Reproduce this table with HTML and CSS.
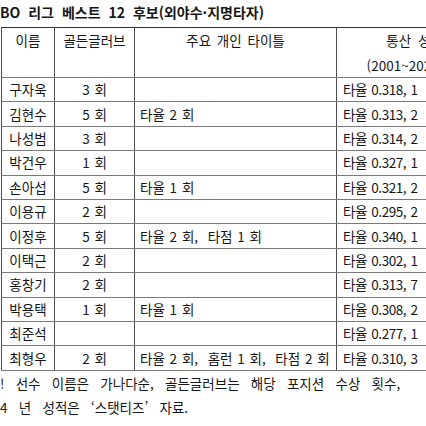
FILE: index.html
```html
<!DOCTYPE html>
<html lang="ko">
<head>
<meta charset="utf-8">
<link rel="stylesheet" href="styles.css">
</head>
<body>
<div class="page">
  <div class="title">BO 리그 베스트 12 후보(외야수·지명타자)</div>
  <table class="board">
    <colgroup>
      <col class="c-name">
      <col class="c-gg">
      <col class="c-title">
      <col class="c-stat">
    </colgroup>
    <thead>
      <tr>
        <th>이름</th>
        <th>골든글러브</th>
        <th class="tt-head">주요 개인 타이틀</th>
        <th class="stat-head">통산 성적<br>(2001~2024 년)</th>
      </tr>
    </thead>
    <tbody>
      <tr><td class="name">구자욱</td><td class="gg">3 회</td><td class="tt"></td><td class="st">타율 0.318, 1</td></tr>
      <tr><td class="name">김현수</td><td class="gg">5 회</td><td class="tt">타율 2 회</td><td class="st">타율 0.313, 2</td></tr>
      <tr><td class="name">나성범</td><td class="gg">3 회</td><td class="tt"></td><td class="st">타율 0.314, 2</td></tr>
      <tr><td class="name">박건우</td><td class="gg">1 회</td><td class="tt"></td><td class="st">타율 0.327, 1</td></tr>
      <tr><td class="name">손아섭</td><td class="gg">5 회</td><td class="tt">타율 1 회</td><td class="st">타율 0.321, 2</td></tr>
      <tr><td class="name">이용규</td><td class="gg">2 회</td><td class="tt"></td><td class="st">타율 0.295, 2</td></tr>
      <tr><td class="name">이정후</td><td class="gg">5 회</td><td class="tt">타율 2 회,&nbsp; 타점 1 회</td><td class="st">타율 0.340, 1</td></tr>
      <tr><td class="name">이택근</td><td class="gg">2 회</td><td class="tt"></td><td class="st">타율 0.302, 1</td></tr>
      <tr><td class="name">홍창기</td><td class="gg">2 회</td><td class="tt"></td><td class="st">타율 0.313, 7</td></tr>
      <tr><td class="name">박용택</td><td class="gg">1 회</td><td class="tt">타율 1 회</td><td class="st">타율 0.308, 2</td></tr>
      <tr><td class="name">최준석</td><td class="gg"></td><td class="tt"></td><td class="st">타율 0.277, 1</td></tr>
      <tr><td class="name">최형우</td><td class="gg">2 회</td><td class="tt">타율 2 회,&nbsp; 홈런 1 회,&nbsp; 타점 2 회</td><td class="st">타율 0.310, 3</td></tr>
    </tbody>
  </table>
  <div class="note">
    <div class="note-line">! 선수 이름은 가나다순, 골든글러브는 해당 포지션 수상 횟수,</div>
    <div class="note-line">4 년 성적은 ‘스탯티즈’ 자료.</div>
  </div>
</div>
</body>
</html>
```

FILE: styles.css
```css
html, body {
  margin: 0;
  padding: 0;
  background: #ffffff;
}
body {
  width: 426px;
  height: 426px;
  overflow: hidden;
  font-family: "Noto Sans CJK KR", "Noto Sans", sans-serif;
  color: #161616;
  font-size: 13.5px;
}
.page {
  width: 600px;
}
.title {
  height: 27px;
  line-height: 24px;
  font-weight: bold;
  font-size: 14px;
  white-space: nowrap;
  word-spacing: 4px;
}
.board {
  border-collapse: collapse;
  table-layout: fixed;
  margin-left: 1px;
  width: 491px;
}
.c-name { width: 53px; }
.c-gg { width: 80px; }
.c-title { width: 202px; }
.c-stat { width: 156px; }
.board th,
.board td {
  padding: 0;
  border-left: 1px solid #4d4d4d;
  border-right: 1px solid #4d4d4d;
  border-top: 1px solid #7a7a7a;
  border-bottom: 1px solid #7a7a7a;
  white-space: nowrap;
  overflow: hidden;
  word-spacing: 1px;
}
.board thead tr {
  height: 49px;
}
.board th {
  font-weight: normal;
  line-height: 24.5px;
  vertical-align: top;
  text-align: center;
  border-top-color: #333333;
}
.board th.tt-head {
  word-spacing: 2px;
}
.board th.stat-head {
  word-spacing: 3px;
}
.board tbody tr {
  height: 24.42px;
}
.board td {
  line-height: 23px;
  vertical-align: middle;
}
.name,
.gg {
  text-align: center;
}
.board td.tt {
  text-align: left;
  padding-left: 5px;
}
.board td.st {
  text-align: left;
  padding-left: 6px;
  word-spacing: 1px;
  letter-spacing: -0.45px;
}
.note-line {
  line-height: 24px;
  white-space: nowrap;
  word-spacing: 7.5px;
}
```
